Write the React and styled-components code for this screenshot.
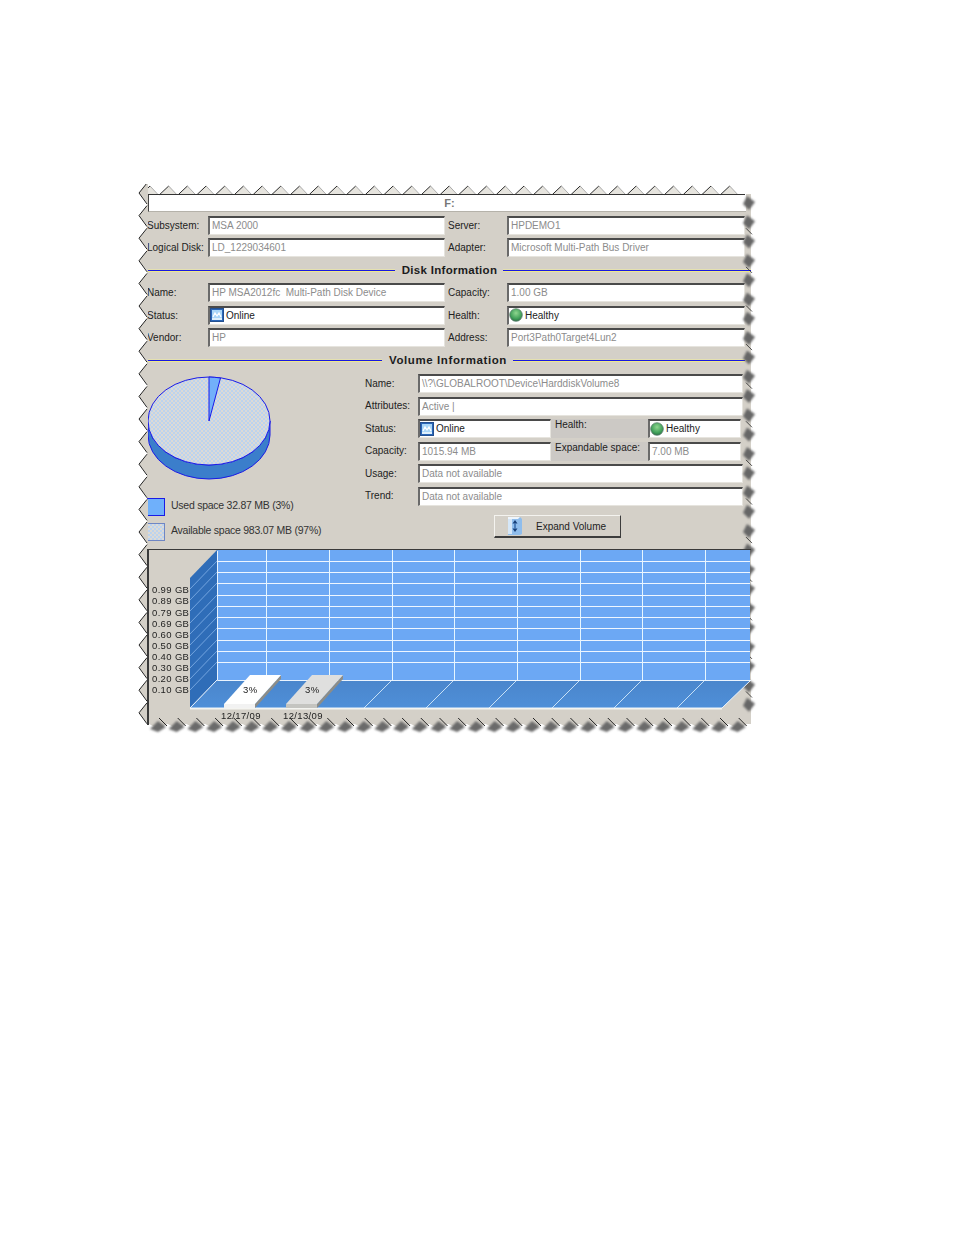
import React from "react";
import styled, { createGlobalStyle } from "styled-components";

const GlobalStyle = createGlobalStyle`
  html, body {
    margin: 0;
    background: #fff;
  }
  body {
    height: 1235px;
    overflow: hidden;
    font-family: "Liberation Sans", Arial, sans-serif;
  }
`;

const Sheet = styled.div`
  position: relative;
  box-sizing: border-box;
  width: 604px;
  height: 530px;
  margin: 194px 0 0 147px;
  background: #d4d0c8;
  color: #222;
  font-size: 10px;
  filter: blur(0.3px);
`;

const TornEdge = styled.svg`
  position: absolute;
  left: -11px;
  top: -10px;
  width: 622px;
  height: 550px;
  pointer-events: none;
`;

const TitleField = styled.div`
  box-sizing: border-box;
  width: 598px;
  height: 18px;
  margin: 0 0 4px 1px;
  padding-left: 4px;
  background: #fff;
  border-left: 1px solid #444;
  border-bottom: 1px solid #b5b2aa;
  text-align: center;
  color: #777;
  font-weight: bold;
  font-size: 11px;
  line-height: 18px;
`;

const FieldGrid = styled.div`
  display: grid;
  grid-template-columns: 61px 237px 62px 238px;
  grid-auto-rows: 19px;
  row-gap: ${(p) => p.$gap}px;
`;

const Label = styled.div`
  display: flex;
  align-items: center;
  padding-left: ${(p) => p.$indent || 0}px;
  white-space: nowrap;
`;

const VolumeLabel = styled(Label)`
  padding-bottom: 1px;
`;

const Value = styled.div`
  box-sizing: border-box;
  display: flex;
  align-items: center;
  gap: 2px;
  grid-column: ${(p) => (p.$span ? `span ${p.$span}` : "auto")};
  height: 19px;
  padding: 0 0 1px ${(p) => (p.$dark ? 0 : 2)}px;
  background: #fff;
  border-top: 2px solid #4a4a4a;
  border-left: 2px solid #6a6a6a;
  border-right: 1px solid #e6e4de;
  border-bottom: 1px solid #e6e4de;
  color: ${(p) => (p.$dark ? "#222" : "#8c8c8c")};
  font-size: 10px;
  white-space: nowrap;
  overflow: hidden;
`;

const Heading = styled.div`
  display: flex;
  align-items: center;
  height: 27px;
  width: ${(p) => p.$width}px;
  margin-bottom: ${(p) => p.$pull || 0}px;
  font-size: 11.5px;
  font-weight: bold;
  letter-spacing: ${(p) => p.$tracking}px;
  color: #1c1c1c;
`;

const Rule = styled.span`
  flex: ${(p) => (p.$length ? `0 0 ${p.$length}px` : "1")};
  height: 1px;
  background: #1818e0;
  box-shadow: 0 1px 0 #efe98a, 0 -1px 0 #e4e0b0;
`;

const HeadingText = styled.span`
  padding: 0 6px 2px 7px;
  white-space: nowrap;
`;

const VolumeSection = styled.section`
  display: flex;
  height: 175px;
`;

const PieColumn = styled.div`
  width: 218px;
  flex: none;
`;

const PieChart = styled.svg`
  display: block;
  width: 126px;
  height: 106px;
  margin-top: 2px;
`;

const Legend = styled.div`
  display: flex;
  align-items: flex-start;
  gap: 6px;
  height: 18px;
  margin-top: ${(p) => p.$top}px;
  font-size: 10.5px;
  letter-spacing: -0.25px;
  color: #333;
  line-height: 14px;
`;

const Swatch = styled.span`
  box-sizing: border-box;
  flex: none;
  width: 18px;
  height: 18px;
  border: 1px solid ${(p) => (p.$used ? "#1a1ae6" : "#6f86c4")};
  background: ${(p) =>
    p.$used
      ? "#6fb0fb"
      : "repeating-conic-gradient(#bcd3ee 0 25%, #dcdad6 0 50%) 0 0 / 4px 4px"};
`;

const VolumeGrid = styled.div`
  display: grid;
  grid-template-columns: 53px 133px 97px 95px;
  grid-auto-rows: 19px;
  row-gap: 3.5px;
  align-content: start;
`;

const SideLabel = styled.div`
  box-sizing: border-box;
  height: 19px;
  padding: 0 0 0 4px;
  background: #ccc9c5;
  line-height: 11px;
  white-space: nowrap;
`;

const NarrowValue = styled(Value)`
  width: 93px;
`;

const ActionRow = styled.div`
  grid-column: 1 / -1;
  display: flex;
  margin: 6px 0 0 129px;
`;

const ExpandButton = styled.button`
  box-sizing: border-box;
  display: flex;
  align-items: center;
  width: 127px;
  height: 23px;
  padding: 0 0 0 12px;
  background: #d4d0c8;
  border: 1px solid #f4f3ef;
  border-right-color: #3c3c3c;
  border-bottom: 2px solid #3c3c3c;
  font: 10px "Liberation Sans", Arial, sans-serif;
  color: #222;
`;

const ButtonText = styled.span`
  margin-left: 13px;
`;

const ChartBox = styled.div`
  position: relative;
  height: 176px;
  border-top: 1px solid #3a3a3a;
  border-left: 2px solid #3a3a3a;
  box-sizing: border-box;
`;

const ChartDrawing = styled.svg`
  position: absolute;
  left: -2px;
  top: -2px;
  width: 606px;
  height: 178px;
  overflow: visible;
`;

const AxisText = styled.text`
  font-family: "Liberation Sans", Arial, sans-serif;
  font-size: 9.5px;
  letter-spacing: 0.35px;
  fill: #222;
`;

const OnlineIcon = () => (
  <svg width="14" height="14" viewBox="0 0 14 14">
    <rect x="0.5" y="0.5" width="13" height="13" fill="#2a66b8" stroke="#24508f" />
    <rect x="2" y="2" width="10" height="8" fill="#a9d6f8" />
    <path d="M3 9 L5 5 L7 8 L9 5 L11 9" fill="none" stroke="#fff" strokeWidth="1.2" />
    <rect x="2" y="10" width="10" height="2" fill="#dff0fb" />
  </svg>
);

const HealthIcon = ({ id }) => (
  <svg width="14" height="14" viewBox="0 0 14 14">
    <defs>
      <radialGradient id={id} cx="0.5" cy="0.35" r="0.65">
        <stop offset="0" stopColor="#8fd68f" />
        <stop offset="0.7" stopColor="#3f9f58" />
        <stop offset="1" stopColor="#2c6f45" />
      </radialGradient>
    </defs>
    <circle cx="7" cy="7" r="6.3" fill={`url(#${id})`} stroke="#5f7f70" strokeWidth="0.8" />
  </svg>
);

const ExpandIcon = () => (
  <svg width="16" height="20" viewBox="0 0 16 20">
    <path d="M1 1 H13 L15 3 V18 L13 19 H1 Z" fill="#8fbdec" />
    <path d="M1 1 H13 L11 3 H1 Z" fill="#eef5fc" />
    <rect x="1" y="3" width="4" height="15" fill="#d5e7f8" />
    <path d="M8 4 L10.5 7.5 H5.5 Z M8 16 L10.5 12.5 H5.5 Z" fill="#173f78" />
    <rect x="7.3" y="7.5" width="1.4" height="5" fill="#2f66a8" />
  </svg>
);

const Pie = () => (
  <PieChart viewBox="146 376 126 106">
    <defs>
      <pattern id="dither" width="4" height="4" patternUnits="userSpaceOnUse">
        <rect width="4" height="4" fill="#dcdad6" />
        <rect width="2" height="2" fill="#bcd3ee" />
        <rect x="2" y="2" width="2" height="2" fill="#bcd3ee" />
      </pattern>
    </defs>
    <path d="M147 421 A61 44 0 0 0 269 421 V435 A61 44 0 0 1 147 435 Z" fill="#3b7ecb" stroke="#1a1ae6" />
    <ellipse cx="208" cy="421" rx="61" ry="44" fill="url(#dither)" stroke="#1a1ae6" />
    <path d="M208 421 L208 377 A61 44 0 0 1 219.5 378 Z" fill="#72b0fa" stroke="#1a1ae6" />
  </PieChart>
);

const gridRows = [561, 572, 583, 595, 606, 617, 628, 640, 651, 662];
const gridCols = [266, 329, 392, 454, 517, 580, 642, 705];
const axisLabels = [
  ["0.99 GB", 593],
  ["0.89 GB", 604],
  ["0.79 GB", 615.5],
  ["0.69 GB", 626.5],
  ["0.60 GB", 637.5],
  ["0.50 GB", 649],
  ["0.40 GB", 660],
  ["0.30 GB", 671],
  ["0.20 GB", 682],
  ["0.10 GB", 693],
];

const Bar = ({ x, top, label, date }) => (
  <g>
    <path d={`M${x + 31} 704 L${x + 57} 675 V679 L${x + 31} 708 Z`} fill="#8d8d88" />
    <path d={`M${x} 704 L${x + 26} 675 H${x + 57} L${x + 31} 704 Z`} fill={top} />
    <rect x={x} y="704" width="31" height="4" fill={top === "#fff" ? "#f2f2f2" : "#c4c4c0"} />
    <AxisText x={x + 19} y="693">{label}</AxisText>
    <AxisText x={x - 3} y="719">{date}</AxisText>
  </g>
);

const History = () => (
  <ChartDrawing viewBox="147 548 606 178">
    <defs>
      <linearGradient id="floorFill" x1="0" y1="0" x2="0" y2="1">
        <stop offset="0" stopColor="#4a86cc" />
        <stop offset="1" stopColor="#4f8fd8" />
      </linearGradient>
    </defs>
    <rect x="217" y="550" width="533" height="130" fill="#6ca8f4" />
    <path d="M190 578 L217 550 V680 L190 708 Z" fill="#2f6db8" />
    <path d="M190 708 L217 680 H751 L722 708 Z" fill="url(#floorFill)" />
    {gridRows.map((y) => (
      <g key={y}>
        <line x1="217" y1={y + 0.5} x2="750" y2={y + 0.5} stroke="#eef6ff" />
        <line x1="190" y1={y + 28} x2="217" y2={y} strokeWidth="0.7" stroke="#8fbbef" />
      </g>
    ))}
    {gridCols.map((x) => (
      <g key={x} stroke="#e6f6ff">
        <line x1={x + 0.5} y1="550" x2={x + 0.5} y2="680" />
        <line x1={x} y1="680" x2={x - 28} y2="708" strokeWidth="0.8" />
      </g>
    ))}
    <path d="M217.5 551 V680.5 H751 M217 680 L190 708 H722 L751 680" fill="none" stroke="#eaf4ff" />
    <line x1="190" y1="708.7" x2="722" y2="708.7" stroke="#f4f4f0" strokeWidth="1.4" />
    <Bar x={224} top="#fff" label="3%" date="12/17/09" />
    <Bar x={286} top="#dfdfde" label="3%" date="12/13/09" />
    {axisLabels.map(([text, y]) => (
      <AxisText key={text} x="152" y={y}>{text}</AxisText>
    ))}
  </ChartDrawing>
);

// torn paper edge, built from repeated teeth along each side
const range = (from, to, step) => {
  const out = [];
  for (let v = from; v < to; v += step) out.push(v);
  return out;
};

const Edge = () => (
  <TornEdge viewBox="136 184 622 550">
    <defs>
      <filter id="soft" x="-30%" y="-30%" width="160%" height="160%">
        <feGaussianBlur stdDeviation="1" />
      </filter>
    </defs>
    {range(141, 735, 18.7).map((x) => (
      <g key={x}>
        <path d={`M${x} 195 L${x + 9} 186 L${x + 17} 195 Z`} fill="#e6e4de" />
        <path d={`M${x} 194.5 L${x + 9} 186`} stroke="#2a2a2a" fill="none" />
        <path d={`M${x + 9} 186 L${x + 17} 194.5`} stroke="#8a8a8a" fill="none" strokeWidth="0.7" />
      </g>
    ))}
    <line x1="147" y1="194.5" x2="745" y2="194.5" stroke="#333" />
    {range(193, 722, 22.6).map((y) => (
      <g key={y}>
        <path d={`M148 ${y - 11} L139 ${y} L148 ${y + 11.3} Z`} fill="#d4d0c8" />
        <path d={`M147 ${y - 10} L139 ${y} L147 ${y + 11}`} stroke="#222" fill="none" />
      </g>
    ))}
    {range(203, 722, 19.3).map((y, i) => (
      <g key={y}>
        <path d={`M747 ${y - 7} L755 ${y - 1} L749 ${y + 7} L743 ${y + 1} Z`} fill="#666" filter="url(#soft)" />
        {i % 2 === 1 && <path d={`M746 ${y + 6} L752 ${y + 12}`} stroke="#222" strokeWidth="0.8" />}
      </g>
    ))}
    {range(150, 742, 18.7).map((x) => (
      <g key={x}>
        <path d={`M${x - 1} 724 L${x + 8} 718 L${x + 17} 724 L${x + 9} 729 Z`} fill="#d4d0c8" />
        <path d={`M${x} 729 L${x + 8} 721 L${x + 16} 727 L${x + 8} 732 Z`} fill="#6a6a6a" filter="url(#soft)" />
        <path d={`M${x + 9} 718 L${x + 17} 726`} stroke="#222" fill="none" />
      </g>
    ))}
  </TornEdge>
);

const App = () => (
  <>
    <GlobalStyle />
    <Sheet>
      <TitleField>F:</TitleField>
      <FieldGrid $gap={3}>
        <Label>Subsystem:</Label>
        <Value>MSA 2000</Value>
        <Label $indent={3}>Server:</Label>
        <Value>HPDEMO1</Value>
        <Label>Logical Disk:</Label>
        <Value>LD_1229034601</Value>
        <Label $indent={3}>Adapter:</Label>
        <Value>Microsoft Multi-Path Bus Driver</Value>
      </FieldGrid>
      <Heading $width={604} $pull={-1} $tracking={0.3}>
        <Rule />
        <HeadingText>Disk Information</HeadingText>
        <Rule />
      </Heading>
      <FieldGrid $gap={3.5}>
        <Label>Name:</Label>
        <Value>HP MSA2012fc&nbsp; Multi-Path Disk Device</Value>
        <Label $indent={3}>Capacity:</Label>
        <Value>1.00 GB</Value>
        <Label>Status:</Label>
        <Value $dark><OnlineIcon />Online</Value>
        <Label $indent={3}>Health:</Label>
        <Value $dark><HealthIcon id="healthDisk" />Healthy</Value>
        <Label>Vendor:</Label>
        <Value>HP</Value>
        <Label $indent={3}>Address:</Label>
        <Value>Port3Path0Target4Lun2</Value>
      </FieldGrid>
      <Heading $width={598} $tracking={0.6}>
        <Rule $length={235} />
        <HeadingText>Volume Information</HeadingText>
        <Rule />
      </Heading>
      <VolumeSection>
        <PieColumn>
          <Pie />
          <Legend $top={16}><Swatch $used />Used space 32.87 MB (3%)</Legend>
          <Legend $top={7}><Swatch />Available space 983.07 MB (97%)</Legend>
        </PieColumn>
        <VolumeGrid>
          <VolumeLabel>Name:</VolumeLabel>
          <Value $span={3}>\\?\GLOBALROOT\Device\HarddiskVolume8</Value>
          <VolumeLabel>Attributes:</VolumeLabel>
          <Value $span={3}>Active |</Value>
          <VolumeLabel>Status:</VolumeLabel>
          <Value $dark><OnlineIcon />Online</Value>
          <SideLabel>Health:</SideLabel>
          <NarrowValue $dark><HealthIcon id="healthVolume" />Healthy</NarrowValue>
          <VolumeLabel>Capacity:</VolumeLabel>
          <Value>1015.94 MB</Value>
          <SideLabel>Expandable space:</SideLabel>
          <NarrowValue>7.00 MB</NarrowValue>
          <VolumeLabel>Usage:</VolumeLabel>
          <Value $span={3}>Data not available</Value>
          <VolumeLabel>Trend:</VolumeLabel>
          <Value $span={3}>Data not available</Value>
          <ActionRow>
            <ExpandButton type="button">
              <ExpandIcon />
              <ButtonText>Expand Volume</ButtonText>
            </ExpandButton>
          </ActionRow>
        </VolumeGrid>
      </VolumeSection>
      <Edge />
      <ChartBox>
        <History />
      </ChartBox>
    </Sheet>
  </>
);

export default App;
